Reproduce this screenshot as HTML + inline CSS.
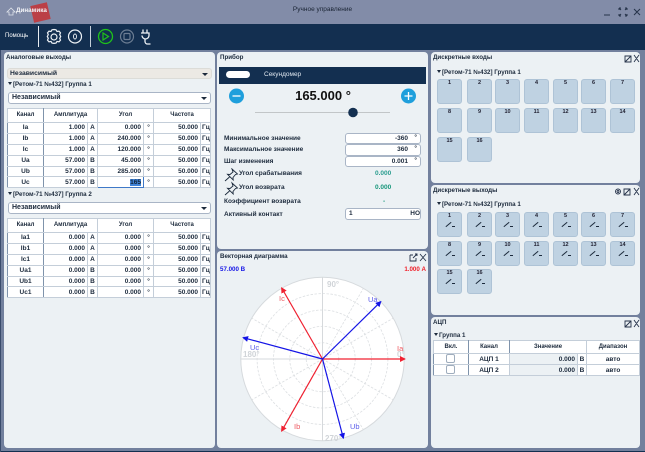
<!DOCTYPE html>
<html><head><meta charset="utf-8"><style>
html,body{margin:0;padding:0;background:#72809d}
body{width:645px;height:452px;overflow:hidden;position:relative}
#w{position:absolute;left:0;top:0;width:645px;height:452px;overflow:hidden;background:#72809d;font:bold 6.5px "Liberation Sans",sans-serif;color:#1c2a3c;filter:blur(.3px)}
.a{position:absolute;white-space:nowrap}
.p{position:absolute;background:#ecf1f4;border-radius:4px}
.t{position:absolute;font-size:6.2px;line-height:9px;white-space:nowrap}
.l{font-size:6.5px}
.sel{position:absolute;background:#fff;border:1px solid #a9b5c6;border-radius:3px;box-sizing:border-box;font-size:7px;line-height:10px;padding-left:3px}
.arr:after{content:"";position:absolute;right:3px;top:4px;border:3px solid transparent;border-top:3px solid #1c2a3c;border-bottom:0}
.inp{font-size:6.5px;line-height:9px}
.tri{display:inline-block;border:2.5px solid transparent;border-top:3px solid #1c2a3c;border-bottom:0;margin-right:1px;vertical-align:1px}
table{position:absolute;border-collapse:collapse;table-layout:fixed;background:#fff;font-size:6.5px;border:1px solid #b9c5d2}
td{border:1px solid #c4ced9;padding:0 1px;line-height:9px;height:10.9px;box-sizing:border-box;white-space:nowrap;overflow:hidden;text-align:center}
td.r{text-align:right;padding-right:2px}
td.d{border-left:1px solid #7f93ab;border-right:1px solid #7f93ab}
tr.h td{font-size:6px}
.b{position:absolute;width:25px;height:25px;background:#bfd2e2;border:1px solid #aec3d6;border-radius:3px;box-sizing:border-box;text-align:center;font-size:5.5px;line-height:7px;color:#223}
.o:before{content:"";position:absolute;left:7px;top:11px;width:7px;height:1px;background:#1c2a3c;transform:rotate(-40deg)}
.o:after{content:"";position:absolute;left:14px;top:13px;width:3px;height:1px;background:#1c2a3c}
.icon{position:absolute}
</style></head><body><div id="w">
<div class="a" style="left:0;top:0;width:645px;height:24px;background:#828ca8"></div>
<div class="a" style="left:32px;top:4px;width:17px;height:17px;background:#bb3f46;transform:rotate(-13deg)"></div>
<svg class="icon" style="left:6px;top:7px" width="10" height="9" fill="none" stroke="#dfe3ea" stroke-width=".8"><path d="M5 1L1 5h2v3h4V5h2z"/></svg>
<div class="a" style="left:16px;top:6px;color:#f4f5f8;font-size:6.300px;line-height:9px">Динамика</div>
<div class="a" style="left:0;width:645px;top:5px;text-align:center;font-size:6.5px;line-height:9px;font-weight:normal;color:#1a2434">Ручное управление</div>
<svg class="icon" style="left:600px;top:6px" width="42" height="12" fill="none" stroke="#26334a" stroke-width="1"><path d="M4 9h6M19 2l2 2M27 2l-2 2M19 10l2-2M27 10l-2-2M19 2h2M19 2v2M27 2h-2M27 2v2M19 10h2M19 10v-2M27 10h-2M27 10v-2M34 3l6 6M40 3l-6 6"/></svg>
<div class="a" style="left:0;top:24px;width:645px;height:26px;background:#132f50"></div>
<div class="a" style="left:5px;top:32px;color:#fff;font-size:6px;line-height:8px;font-weight:normal">Помощь</div>
<div class="a" style="left:38px;top:26px;width:1px;height:21px;background:#e8edf2"></div>
<div class="a" style="left:90px;top:26px;width:1px;height:21px;background:#c5ced8"></div>
<svg class="icon" style="left:44px;top:27px" width="110" height="20" fill="none" stroke="#eef2f6" stroke-width="1.2">
<path d="M10 2.500l2 .3 1 1.700 2-.4 1.500 1.700-.8 1.800 1 1.900-1 1.800.8 1.800-1.500 1.700-2-.4-1 1.700-2 .3-2-.3-1-1.700-2 .4-1.500-1.700.8-1.800-1-1.800 1-1.900-.8-1.800 1.500-1.700 2 .4 1-1.700z"/>
<circle cx="10" cy="10" r="3"/>
<circle cx="31" cy="9.500" r="6.500"/><ellipse cx="31" cy="9.500" rx="1.500" ry="2.500" stroke-width=".9"/>
<circle cx="61.500" cy="9.500" r="7" stroke="#1fc21a" stroke-width="1.300"/><path d="M59 6v7l5.500-3.500z" stroke="#1fc21a"/>
<circle cx="83" cy="9.500" r="6.500" stroke="#6b7c92"/><rect x="80" y="6.500" width="6" height="6" rx="1" stroke="#6b7c92"/>
<path d="M99 2.500v3M103 2.500v3M97 6h8v2.500a3.500 3.500 0 0 1-7 0M101 12v2.500a2.500 2.500 0 0 0 2.500 2.500h3" stroke-width="1.300"/>
</svg>

<!-- left panel -->
<div class="p" style="left:4px;top:52px;width:211px;height:396px"></div>
<div class="t" style="left:6px;top:53px">Аналоговые выходы</div>
<div class="sel arr" style="left:7px;top:68px;width:205px;height:11px;background:#ece9e4;border-color:#dcdcd8;padding-left:2px;font-size:6.800px;line-height:9px">Независимый</div>
<div class="t" style="left:8px;top:80px"><span class="tri"></span>[Ретом-71 №432] Группа 1</div>
<div class="sel arr" style="left:8px;top:92px;width:203px;height:12px">Независимый</div>
<table style="left:7px;top:108px;width:203px">
<colgroup><col style="width:36px"><col style="width:44px"><col style="width:10px"><col style="width:46px"><col style="width:10px"><col style="width:47px"><col style="width:10px"></colgroup>
<tr class="h"><td style="height:14px;border-right-color:#7f93ab">Канал</td><td colspan="2" style="height:14px">Амплитуда</td><td colspan="2" style="height:14px">Угол</td><td colspan="2" style="height:14px">Частота</td></tr>
<tr><td class="d">Ia</td><td class="r">1.000</td><td>А</td><td class="r">0.000</td><td>°</td><td class="r">50.000</td><td>Гц</td></tr>
<tr><td class="d">Ib</td><td class="r">1.000</td><td>А</td><td class="r">240.000</td><td>°</td><td class="r">50.000</td><td>Гц</td></tr>
<tr><td class="d">Ic</td><td class="r">1.000</td><td>А</td><td class="r">120.000</td><td>°</td><td class="r">50.000</td><td>Гц</td></tr>
<tr><td class="d">Ua</td><td class="r">57.000</td><td>В</td><td class="r">45.000</td><td>°</td><td class="r">50.000</td><td>Гц</td></tr>
<tr><td class="d">Ub</td><td class="r">57.000</td><td>В</td><td class="r">285.000</td><td>°</td><td class="r">50.000</td><td>Гц</td></tr>
<tr><td class="d">Uc</td><td class="r">57.000</td><td>В</td><td class="r" style="border:1px solid #3f79c8"><span style="background:#3f83d8;color:#123">165</span></td><td>°</td><td class="r">50.000</td><td>Гц</td></tr>
</table>
<div class="t" style="left:8px;top:190px"><span class="tri"></span>[Ретом-71 №437] Группа 2</div>
<div class="sel arr" style="left:8px;top:202px;width:203px;height:12px">Независимый</div>
<table style="left:7px;top:218px;width:203px">
<colgroup><col style="width:36px"><col style="width:44px"><col style="width:10px"><col style="width:46px"><col style="width:10px"><col style="width:47px"><col style="width:10px"></colgroup>
<tr class="h"><td style="height:14px;border-right-color:#7f93ab">Канал</td><td colspan="2" style="height:14px">Амплитуда</td><td colspan="2" style="height:14px">Угол</td><td colspan="2" style="height:14px">Частота</td></tr>
<tr><td class="d">Ia1</td><td class="r">0.000</td><td>А</td><td class="r">0.000</td><td>°</td><td class="r">50.000</td><td>Гц</td></tr>
<tr><td class="d">Ib1</td><td class="r">0.000</td><td>А</td><td class="r">0.000</td><td>°</td><td class="r">50.000</td><td>Гц</td></tr>
<tr><td class="d">Ic1</td><td class="r">0.000</td><td>А</td><td class="r">0.000</td><td>°</td><td class="r">50.000</td><td>Гц</td></tr>
<tr><td class="d">Ua1</td><td class="r">0.000</td><td>В</td><td class="r">0.000</td><td>°</td><td class="r">50.000</td><td>Гц</td></tr>
<tr><td class="d">Ub1</td><td class="r">0.000</td><td>В</td><td class="r">0.000</td><td>°</td><td class="r">50.000</td><td>Гц</td></tr>
<tr><td class="d">Uc1</td><td class="r">0.000</td><td>В</td><td class="r">0.000</td><td>°</td><td class="r">50.000</td><td>Гц</td></tr>
</table>

<!-- device panel -->
<div class="p" style="left:217px;top:52px;width:211px;height:197px"></div>
<div class="t" style="left:220px;top:53px">Прибор</div>
<div class="a" style="left:219px;top:67px;width:207px;height:17px;background:#132f50"></div>
<div class="a" style="left:226px;top:71px;width:24px;height:7px;background:#fff;border-radius:4px"></div>
<div class="a" style="left:264px;top:70px;color:#dfe7ef;font-size:6.500px;line-height:9px;font-weight:normal">Секундомер</div>
<div class="a" style="left:223px;width:200px;top:88px;text-align:center;font-size:13px;line-height:15px;color:#111">165.000 °</div>
<svg class="icon" style="left:215px;top:85px" width="215" height="35">
<circle cx="21.500" cy="11" r="7.500" fill="#1f9fdc"/><path d="M17.500 11h8" stroke="#fff" stroke-width="1.300"/>
<circle cx="193.500" cy="11" r="7.500" fill="#1f9fdc"/><path d="M189.500 11h8M193.500 7v8" stroke="#fff" stroke-width="1.300"/>
<path d="M40 27.500h135" stroke="#c2c6c8" stroke-width="1"/><circle cx="138" cy="27.500" r="4.800" fill="#132f50"/>
</svg>
<div class="t l" style="left:224px;top:134px">Минимальное значение</div>
<div class="t l" style="left:224px;top:145px">Максимальное значение</div>
<div class="t l" style="left:224px;top:157px">Шаг изменения</div>
<div class="t l" style="left:239px;top:169px">Угол срабатывания</div>
<div class="t l" style="left:239px;top:183px">Угол возврата</div>
<div class="t l" style="left:224px;top:197px">Коэффициент возврата</div>
<div class="t l" style="left:224px;top:210px">Активный контакт</div>
<div class="sel inp" style="left:345px;top:133px;width:76px;height:11px;text-align:right;padding-right:12px">-360<span class="a" style="right:3px;top:-1px">°</span></div>
<div class="sel inp" style="left:345px;top:144px;width:76px;height:12px;text-align:right;padding-right:12px">360<span class="a" style="right:3px;top:-1px">°</span></div>
<div class="sel inp" style="left:345px;top:156px;width:76px;height:11px;text-align:right;padding-right:12px">0.001<span class="a" style="right:3px;top:-1px">°</span></div>
<div class="t l" style="left:375px;top:169px;color:#2a9d8f">0.000</div>
<div class="t l" style="left:375px;top:183px;color:#16967a">0.000</div>
<div class="t l" style="left:383px;top:197px;color:#16967a">-</div>
<div class="sel inp" style="left:345px;top:208px;width:76px;height:12px;padding-left:3px;line-height:10px">1<span class="a" style="right:0;top:0">НО</span></div>
<svg class="icon" style="left:224px;top:168px" width="15" height="30" fill="none" stroke="#1c2a3c" stroke-width=".9"><path d="M8 1l5.500 5-2 .5-2.500 3 .2 2.500-5.700-5.700 2.500.2 3-2.500zM5.500 9l-4.500 4M8 15l5.500 5-2 .5-2.500 3 .2 2.500-5.700-5.700 2.500.2 3-2.500zM5.500 23l-4.500 4"/></svg>

<!-- vector panel -->
<div class="p" style="left:217px;top:251px;width:211px;height:197px"></div>
<div class="t" style="left:220px;top:252px">Векторная диаграмма</div>
<svg class="icon" style="left:409px;top:253px" width="18" height="9" fill="none" stroke="#26334a" stroke-width=".9"><path d="M1 2h3M1 2v6h6V5M4 5l4-4M6 1h2v2M11 1l6 7M17 1l-6 7"/></svg>
<div class="t" style="left:220px;top:265px;color:#1414e6">57.000 В</div>
<div class="t" style="right:219px;top:265px;color:#f01e28">1.000 А</div>
<svg class="icon" style="left:217px;top:251px" width="211" height="197" font-family="Liberation Sans,sans-serif" font-size="8">
<defs><marker id="mr" markerWidth="5" markerHeight="5" refX="4" refY="2.500" orient="auto"><path d="M0 0L5 2.500L0 5z" fill="#f02030"/></marker><marker id="mb" markerWidth="5" markerHeight="5" refX="4" refY="2.500" orient="auto"><path d="M0 0L5 2.500L0 5z" fill="#1414e6"/></marker></defs>
<circle cx="105.500" cy="108" r="81.700" fill="#fff" stroke="#d6dadd"/>
<g fill="none" stroke="#dcdfe2" stroke-width=".8" stroke-dasharray="2.500 1.500">
<circle cx="105.500" cy="108" r="16.300"/><circle cx="105.500" cy="108" r="32.700"/><circle cx="105.500" cy="108" r="49"/><circle cx="105.500" cy="108" r="65.400"/>
<path d="M105.500 108L176.300 67.100M105.500 108L146.400 37.300M105.500 108L64.600 37.300M105.500 108L34.700 67.100M105.500 108L34.700 148.900M105.500 108L64.600 178.700M105.500 108L146.400 178.700M105.500 108L176.300 148.900"/>
</g>
<path d="M23.800 108H187.200M105.500 26.300V189.700" stroke="#d6d9dc" stroke-width="1"/>
<g fill="#d0d4d8"><text x="110" y="36">90°</text><text x="108" y="190">270°</text><text x="26" y="106">180°</text><text x="180" y="106">0°</text></g>
<g stroke="#f02030" stroke-width="1.200" fill="none"><path d="M105.500 108L187.700 108" marker-end="url(#mr)"/><path d="M105.500 108L64.700 37" marker-end="url(#mr)"/><path d="M105.500 108L64.700 180" marker-end="url(#mr)"/></g>
<g stroke="#1414e6" stroke-width="1.200" fill="none"><path d="M105.500 108L163.700 50.700" marker-end="url(#mb)"/><path d="M105.500 108L26.300 86.700" marker-end="url(#mb)"/><path d="M105.500 108L126.300 187" marker-end="url(#mb)"/></g>
<g fill="#ee5a62" font-weight="normal"><text x="180" y="100" font-size="7.500">Ia</text><text x="62" y="50" font-size="7.500">Ic</text><text x="77" y="178" font-size="7.500">Ib</text></g>
<g fill="#5f60ea" font-weight="normal"><text x="151" y="51" font-size="7.500">Ua</text><text x="33" y="99" font-size="7.500">Uc</text><text x="133" y="178" font-size="7.500">Ub</text></g>
</svg>

<!-- discrete inputs -->
<div class="p" style="left:431px;top:52px;width:209px;height:131px"></div>
<div class="t" style="left:433px;top:53px">Дискретные входы</div>
<svg class="icon" style="left:624px;top:54px" width="16" height="9" fill="none" stroke="#26334a" stroke-width=".9"><path d="M1 2h6v6H1zM1 8l6-6M10 1l5 7M15 1l-5 7"/></svg>
<div class="t" style="left:437px;top:68px"><span class="tri"></span>[Ретом-71 №432] Группа 1</div>
<div class="b" style="left:437px;top:79px">1</div><div class="b" style="left:467px;top:79px">2</div><div class="b" style="left:495px;top:79px">3</div><div class="b" style="left:524px;top:79px">4</div><div class="b" style="left:553px;top:79px">5</div><div class="b" style="left:581px;top:79px">6</div><div class="b" style="left:610px;top:79px">7</div>
<div class="b" style="left:437px;top:108px">8</div><div class="b" style="left:467px;top:108px">9</div><div class="b" style="left:495px;top:108px">10</div><div class="b" style="left:524px;top:108px">11</div><div class="b" style="left:553px;top:108px">12</div><div class="b" style="left:581px;top:108px">13</div><div class="b" style="left:610px;top:108px">14</div>
<div class="b" style="left:437px;top:137px">15</div><div class="b" style="left:467px;top:137px">16</div>

<!-- discrete outputs -->
<div class="p" style="left:431px;top:185px;width:209px;height:130px"></div>
<div class="t" style="left:433px;top:186px">Дискретные выходы</div>
<svg class="icon" style="left:614px;top:187px" width="26" height="9" fill="none" stroke="#26334a" stroke-width=".9"><circle cx="4" cy="4.500" r="2.500"/><circle cx="4" cy="4.500" r="1"/><path d="M10 2h6v6h-6zM10 8l6-6M20 1l5 7M25 1l-5 7"/></svg>
<div class="t" style="left:437px;top:200px"><span class="tri"></span>[Ретом-71 №432] Группа 1</div>
<div class="b o" style="left:437px;top:212px">1</div><div class="b o" style="left:467px;top:212px">2</div><div class="b o" style="left:495px;top:212px">3</div><div class="b o" style="left:524px;top:212px">4</div><div class="b o" style="left:553px;top:212px">5</div><div class="b o" style="left:581px;top:212px">6</div><div class="b o" style="left:610px;top:212px">7</div>
<div class="b o" style="left:437px;top:241px">8</div><div class="b o" style="left:467px;top:241px">9</div><div class="b o" style="left:495px;top:241px">10</div><div class="b o" style="left:524px;top:241px">11</div><div class="b o" style="left:553px;top:241px">12</div><div class="b o" style="left:581px;top:241px">13</div><div class="b o" style="left:610px;top:241px">14</div>
<div class="b o" style="left:437px;top:269px">15</div><div class="b o" style="left:467px;top:269px">16</div>

<!-- ADC -->
<div class="p" style="left:431px;top:317px;width:209px;height:131px"></div>
<div class="t" style="left:433px;top:318px">АЦП</div>
<svg class="icon" style="left:624px;top:319px" width="16" height="9" fill="none" stroke="#26334a" stroke-width=".9"><path d="M1 2h6v6H1zM1 8l6-6M10 1l5 7M15 1l-5 7"/></svg>
<div class="t" style="left:434px;top:331px"><span class="tri"></span>Группа 1</div>
<table style="left:433px;top:340px;width:206px">
<colgroup><col style="width:35px"><col style="width:41px"><col style="width:68px"><col style="width:9px"><col style="width:53px"></colgroup>
<tr class="h"><td style="height:13px;border-right-color:#7f93ab">Вкл.</td><td style="height:13px;border-right-color:#7f93ab">Канал</td><td colspan="2" style="height:13px">Значение</td><td style="height:13px;border-left-color:#7f93ab">Диапазон</td></tr>
<tr><td class="d" style="height:11px"></td><td style="height:11px">АЦП 1</td><td class="r" style="background:#ecf1f4">0.000</td><td>В</td><td style="border-left-color:#7f93ab">авто</td></tr>
<tr><td class="d" style="height:11px"></td><td style="height:11px">АЦП 2</td><td class="r" style="background:#ecf1f4">0.000</td><td>В</td><td style="border-left-color:#7f93ab">авто</td></tr>
</table>
<div class="a" style="left:446px;top:354px;width:9px;height:9px;background:#fff;border:1px solid #9fadbd;border-radius:2px;box-sizing:border-box"></div>
<div class="a" style="left:446px;top:365px;width:9px;height:9px;background:#fff;border:1px solid #9fadbd;border-radius:2px;box-sizing:border-box"></div>
<div class="a" style="left:0;top:451px;width:645px;height:1px;background:#132f50"></div>
<div class="a" style="left:0;top:50px;width:1px;height:402px;background:#3a4c6c"></div>
</div></body></html>
